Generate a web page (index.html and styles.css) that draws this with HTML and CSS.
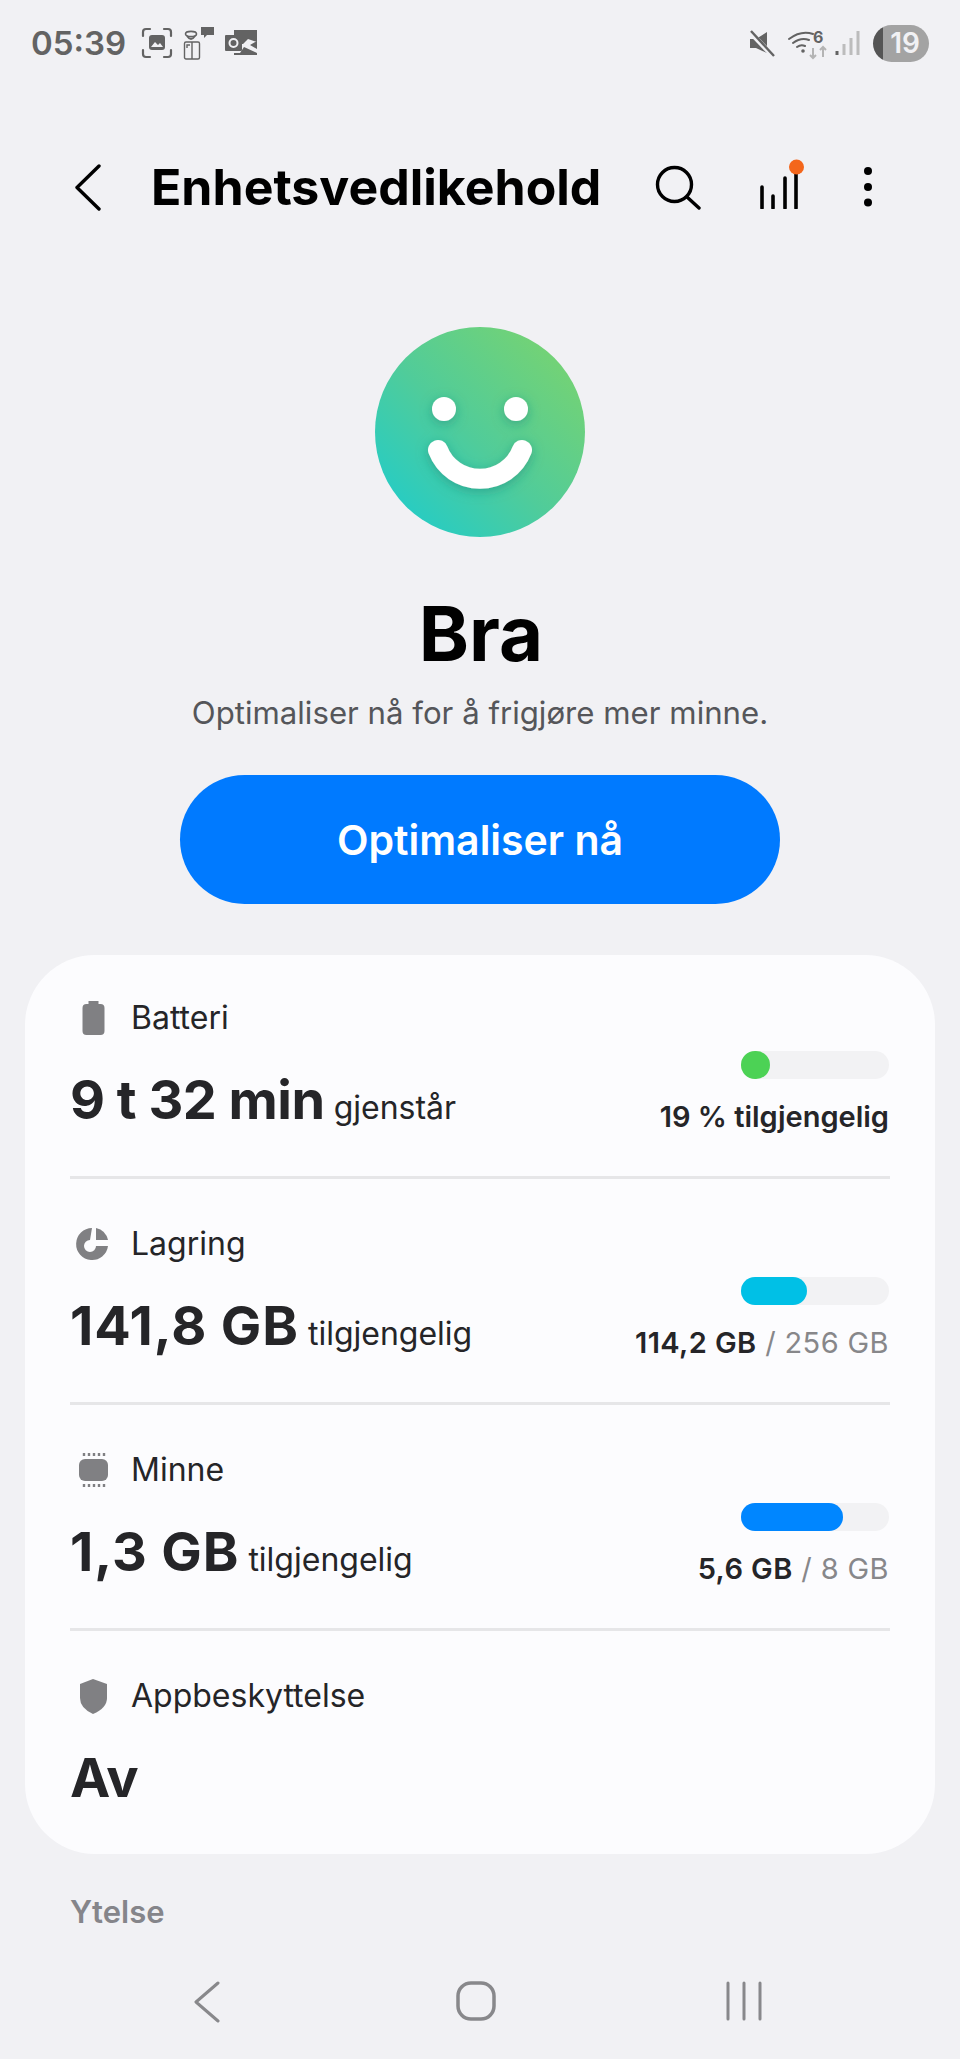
FILE: index.html
```html
<!DOCTYPE html>
<html lang="no">
<head>
    <meta charset="UTF-8">
    <meta name="viewport" content="width=device-width, initial-scale=1.0">
    <title>Enhetsvedlikehold</title>
    <link rel="stylesheet" href="styles.css">
</head>
<body>
    <div class="statusbar">
        <div class="status-left">
            <span class="clock">05:39</span>
            <svg class="status-icon capture" width="32" height="32" viewBox="0 0 32 32">
                <path d="M2 9V5q0-3 3-3h4M23 2h4q3 0 3 3v4M30 23v4q0 3-3 3h-4M9 30H5q-3 0-3-3v-4" fill="none" stroke="#636363" stroke-width="2.2" stroke-linecap="round"/>
                <rect x="8" y="8" width="16" height="15" rx="3" fill="#636363"/>
                <path d="M10 20l4-5 3 3 2-2 3 4z" fill="#f1f1f4"/>
            </svg>
            <svg class="status-icon" width="32" height="34" viewBox="0 0 32 34">
                <ellipse cx="8" cy="8" rx="5.5" ry="2.6" fill="none" stroke="#636363" stroke-width="1.6"/>
                <path d="M4 10q4 6 8 0" fill="none" stroke="#636363" stroke-width="1.8"/>
                <path d="M18 1h13v8h-7l-3 3v-3h-3z" fill="#636363"/>
                <rect x="1.500" y="16" width="15" height="17" rx="1.500" fill="none" stroke="#636363" stroke-width="1.400"/>
                <path d="M9 16v17M4 22v-3h3" fill="none" stroke="#636363" stroke-width="1.400"/>
            </svg>
            <svg class="status-icon" width="33" height="26" viewBox="0 0 33 26">
                <path d="M9 0h23v12l-9-3-5 5h-9z" fill="#636363"/>
                <rect x="0" y="5" width="17" height="16" rx="1" fill="#636363"/>
                <circle cx="8.500" cy="13" r="4" fill="none" stroke="#f1f1f4" stroke-width="2"/>
                <path d="M32 11v8l-7-4zM19 17l13 6v2H9v-2h6z" fill="#636363"/>
            </svg>
        </div>
        <div class="status-right">
            <svg width="27" height="27" viewBox="0 0 27 27">
                <path d="M2 9h6l11-7v21L8 18H2z" fill="#636363"/>
                <path d="M2 2l23 24" stroke="#f1f1f4" stroke-width="5"/>
                <path d="M3 1l23 25" stroke="#636363" stroke-width="2.400"/>
            </svg>
            <svg class="wifi" width="40" height="33" viewBox="0 -3 40 33">
                <path d="M1 9q12-9 24-5M5 13q8-6 16-3M9 17q4-3 8-1" fill="none" stroke="#636363" stroke-width="2" stroke-linecap="round"/>
                <circle cx="15" cy="21" r="1.800" fill="#636363"/>
                <text class="wifi-six" x="25" y="13">6</text>
                <path d="M25 18v10m-3-3l3 3 3-3" fill="none" stroke="#b4b4b4" stroke-width="2"/>
                <path d="M35 27v-10m-3 3l3-3 3 3" fill="none" stroke="#b4b4b4" stroke-width="2"/>
            </svg>
            <svg width="25" height="26" viewBox="0 0 25 26">
                <path d="M2 21v4" stroke="#636363" stroke-width="3"/>
                <path d="M9 14v11M16 8v17M23 1v24" stroke="#bcbcbc" stroke-width="3"/>
            </svg>
            <div class="battery-pill">19</div>
        </div>
    </div>

    <div class="appbar">
        <button class="icon-btn back">
            <svg width="26" height="47" viewBox="0 0 26 47">
                <path d="M24 2L2 23.500 24 45" fill="none" stroke="#000" stroke-width="3.400" stroke-linecap="round" stroke-linejoin="round"/>
            </svg>
        </button>
        <h1>Enhetsvedlikehold</h1>
        <button class="icon-btn search">
            <svg width="46" height="45" viewBox="0 0 46 45">
                <circle cx="19.500" cy="19.500" r="17" fill="none" stroke="#000" stroke-width="3.400"/>
                <path d="M32 32l12 11" stroke="#000" stroke-width="3.400" stroke-linecap="round"/>
            </svg>
        </button>
        <button class="icon-btn chart">
            <svg width="48" height="50" viewBox="0 0 48 50">
                <path d="M4 49V28M15 49V37M27 49V19M38 49V8" stroke="#000" stroke-width="3.600" stroke-linecap="round"/>
                <circle cx="38.500" cy="8" r="7.500" fill="#f4661b"/>
            </svg>
        </button>
        <button class="icon-btn more">
            <svg width="10" height="42" viewBox="0 0 10 42">
                <circle cx="5" cy="5" r="4" fill="#000"/>
                <circle cx="5" cy="21" r="4" fill="#000"/>
                <circle cx="5" cy="36.500" r="4" fill="#000"/>
            </svg>
        </button>
    </div>

    <div class="hero">
        <svg class="smiley" width="210" height="210" viewBox="0 0 210 210">
            <defs>
                <linearGradient id="face" x1="0.850" y1="0.150" x2="0.150" y2="0.850">
                    <stop offset="0" stop-color="#72d277"/>
                    <stop offset="0.550" stop-color="#50cc9a"/>
                    <stop offset="1" stop-color="#2accc0"/>
                </linearGradient>
                <filter id="soft" x="-30%" y="-30%" width="160%" height="170%">
                    <feDropShadow dx="0" dy="3" stdDeviation="6" flood-color="#1c8f80" flood-opacity="0.6"/>
                </filter>
            </defs>
            <circle cx="105" cy="105" r="105" fill="url(#face)"/>
            <g filter="url(#soft)">
                <circle cx="69" cy="82" r="12" fill="#fff"/>
                <circle cx="141" cy="82" r="12" fill="#fff"/>
                <path d="M63 123A45 45 0 0 0 147 123" fill="none" stroke="#fff" stroke-width="20" stroke-linecap="round"/>
            </g>
        </svg>
        <div class="status-word">Bra</div>
        <p class="status-note">Optimaliser nå for å frigjøre mer minne.</p>
        <button class="optimize-btn">Optimaliser nå</button>
    </div>

    <div class="card">
        <div class="row">
            <div class="row-main">
                <div class="row-label">
                    <svg class="row-icon" width="40" height="36" viewBox="0 0 40 36">
                        <path d="M15 1h10v3h2q4 0 4 4v23q0 4-4 4H13q-4 0-4-4V8q0-4 4-4h2z" fill="#808083" transform="translate(-0.500 0)"/>
                    </svg>
                    Batteri
                </div>
                <div class="row-value"><b>9 t 32 min</b> <span>gjenstår</span></div>
            </div>
            <div class="row-side">
                <div class="bar"><div class="bar-fill green" style="width: 29px"></div></div>
                <div class="side-text"><b>19 % tilgjengelig</b></div>
            </div>
        </div>
        <div class="row">
            <div class="row-main">
                <div class="row-label">
                    <svg class="row-icon" width="40" height="36" viewBox="0 0 40 36">
                        <path d="M18 2a16 16 0 1 0 16 18H22a6 6 0 1 1-6-6z" fill="#808083"/>
                        <path d="M22 2a16 16 0 0 1 12 12H22z" fill="#808083"/>
                    </svg>
                    Lagring
                </div>
                <div class="row-value"><b class="wide">141,8 GB</b> <span>tilgjengelig</span></div>
            </div>
            <div class="row-side">
                <div class="bar"><div class="bar-fill cyan" style="width: 66px"></div></div>
                <div class="side-text spaced"><b>114,2 GB</b> <i>/ 256 GB</i></div>
            </div>
        </div>
        <div class="row">
            <div class="row-main">
                <div class="row-label">
                    <svg class="row-icon" width="40" height="36" viewBox="0 0 40 36">
                        <rect x="5" y="7" width="29" height="22" rx="6" fill="#808083"/>
                        <path d="M10 1v3M15 1v3M20 1v3M25 1v3M30 1v3M10 32v3M15 32v3M20 32v3M25 32v3M30 32v3" stroke="#808083" stroke-width="2.400"/>
                    </svg>
                    Minne
                </div>
                <div class="row-value"><b class="wide">1,3 GB</b> <span>tilgjengelig</span></div>
            </div>
            <div class="row-side">
                <div class="bar"><div class="bar-fill blue" style="width: 102px"></div></div>
                <div class="side-text spaced"><b>5,6 GB</b> <i>/ 8 GB</i></div>
            </div>
        </div>
        <div class="row last">
            <div class="row-main">
                <div class="row-label">
                    <svg class="row-icon" width="40" height="36" viewBox="0 0 40 36">
                        <path d="M19 1l14 5v14q0 10-14 16Q6 30 6 20V6z" fill="#808083"/>
                    </svg>
                    Appbeskyttelse
                </div>
                <div class="row-value"><b>Av</b></div>
            </div>
        </div>
    </div>

    <div class="section-title">Ytelse</div>

    <div class="navbar">
        <svg width="26" height="42" viewBox="0 0 26 42">
            <path d="M24 2L2 21l22 19" fill="none" stroke="#88888b" stroke-width="3" stroke-linecap="round" stroke-linejoin="round"/>
        </svg>
        <svg class="nav-home" width="40" height="40" viewBox="0 0 40 40">
            <rect x="2" y="2" width="36" height="36" rx="13" fill="none" stroke="#88888b" stroke-width="3.500"/>
        </svg>
        <svg class="nav-recent" width="38" height="40" viewBox="0 0 38 40">
            <path d="M3 2v36M19 2v36M35 2v36" stroke="#88888b" stroke-width="3" stroke-linecap="round"/>
        </svg>
    </div>
</body>
</html>
```

FILE: styles.css
```css
* {
    box-sizing: border-box;
}

html, body {
    margin: 0;
    padding: 0;
}

body {
    width: 960px;
    height: 2059px;
    overflow: hidden;
    font-family: Inter, "Noto Sans", sans-serif;
    background-color: #f1f1f4;
    color: #252528;
}

.statusbar {
    display: flex;
    justify-content: space-between;
    align-items: center;
    height: 86px;
    padding: 0 31px 0 31px;
}

.status-left, .status-right {
    display: flex;
    align-items: center;
}

.clock {
    font-size: 33px;
    font-weight: 600;
    color: #636363;
    margin-right: 15px;
}

.status-icon {
    margin-right: 10px;
}

.status-right svg {
    margin-right: 13px;
}

.status-right .wifi {
    margin-right: 7px;
}

.wifi-six {
    font-family: Inter, sans-serif;
    font-size: 16px;
    font-weight: 700;
    fill: #636363;
}

.battery-pill {
    width: 56px;
    height: 37px;
    border-radius: 19px;
    background: linear-gradient(90deg, #555 0, #555 10px, #a3a3a3 10px);
    color: #f1f1f4;
    font-size: 28px;
    font-weight: 600;
    line-height: 37px;
    text-align: right;
    padding-right: 9px;
}

.appbar {
    display: flex;
    align-items: center;
    height: 102px;
    margin-top: 50px;
    padding-left: 75px;
}

.appbar h1 {
    margin: 0 0 0 50px;
    width: 504px;
    font-size: 50px;
    font-weight: 700;
    color: #000;
    white-space: nowrap;
}

.icon-btn {
    display: flex;
    padding: 0;
    border: none;
    background: none;
}

.search {
    margin-right: 57px;
}

.chart {
    margin-top: -6px;
    margin-right: 57px;
}

.hero {
    display: flex;
    flex-direction: column;
    align-items: center;
    margin-top: 89px;
}

.status-word {
    margin-top: 50px;
    margin-left: 2px;
    font-size: 76px;
    font-weight: 700;
    line-height: 92px;
    color: #000;
}

.status-note {
    margin: 12px 0 0;
    font-size: 31.2px;
    line-height: 44px;
    color: #55565a;
}

.optimize-btn {
    width: 600px;
    height: 129px;
    margin-top: 40px;
    border: none;
    border-radius: 65px;
    background-color: #007aff;
    color: #fff;
    font-family: inherit;
    font-size: 41px;
    font-weight: 600;
}

.card {
    margin: 51px 25px 0;
    height: 899px;
    padding: 0 45px;
    border-radius: 70px;
    background-color: #fcfcfe;
}

.row {
    display: flex;
    justify-content: space-between;
    height: 226px;
    padding-top: 41px;
    border-bottom: 3px solid #e6e6e8;
}

.row:first-child {
    height: 224px;
    padding-top: 39px;
}

.row.last {
    border-bottom: none;
}

.row-label {
    display: flex;
    align-items: center;
    font-size: 32px;
    line-height: 48px;
}

.row-icon {
    margin-right: 17px;
    margin-left: 4px;
}

.row-value {
    margin-top: 25px;
    white-space: nowrap;
    font-size: 32px;
    line-height: 66px;
}

.row-value b {
    font-size: 54px;
    font-weight: 700;
    letter-spacing: -0.5px;
}

.row-value b.wide {
    letter-spacing: 0.9px;
}

.row-side {
    display: flex;
    flex-direction: column;
    align-items: flex-end;
    padding-top: 57px;
    padding-right: 1px;
}

.bar {
    width: 148px;
    height: 28px;
    border-radius: 14px;
    background-color: #f2f2f4;
}

.bar-fill {
    height: 100%;
    border-radius: 14px;
}

.green {
    background-color: #4cd255;
}

.cyan {
    background-color: #00c0e6;
}

.blue {
    background-color: #0086ff;
}

.side-text {
    margin-top: 17px;
    font-size: 29px;
    line-height: 42px;
    white-space: nowrap;
}

.side-text.spaced {
    letter-spacing: 0.4px;
}

.side-text b {
    font-weight: 600;
}

.side-text i {
    font-style: normal;
    font-weight: 400;
    color: #87878a;
}

.section-title {
    margin: 39px 0 0 70px;
    font-size: 31px;
    font-weight: 600;
    line-height: 38px;
    color: #85858a;
}

.navbar {
    display: flex;
    margin-top: 50px;
    padding-left: 194px;
}

.nav-home {
    margin-left: 236px;
}

.nav-recent {
    margin-left: 229px;
}
```
